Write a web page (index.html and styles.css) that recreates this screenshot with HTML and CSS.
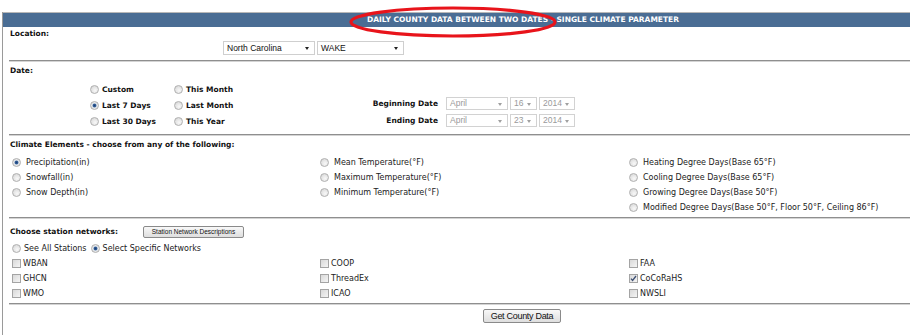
FILE: index.html
```html
<!DOCTYPE html>
<html lang="en">
<head>
    <meta charset="UTF-8">
    <title>Daily County Data</title>
    <link rel="stylesheet" href="styles.css">
</head>
<body>
    <div class="panel">
        <div class="title">DAILY COUNTY DATA BETWEEN TWO DATES - SINGLE CLIMATE PARAMETER</div>

        <!-- Location -->
        <div class="block loc">
            <div class="head">Location:</div>
            <div class="loc-row">
                <span class="sel state">North Carolina<i class="arr"></i></span>
                <span class="sel county">WAKE<i class="arr"></i></span>
            </div>
        </div>

        <!-- Date -->
        <div class="block date">
            <div class="head">Date:</div>
            <div class="date-body">
                <div class="presets">
                    <label class="opt"><input type="radio" name="range">Custom</label>
                    <label class="opt"><input type="radio" name="range">This Month</label>
                    <label class="opt"><input type="radio" name="range" checked>Last 7 Days</label>
                    <label class="opt"><input type="radio" name="range">Last Month</label>
                    <label class="opt"><input type="radio" name="range">Last 30 Days</label>
                    <label class="opt"><input type="radio" name="range">This Year</label>
                </div>
                <div class="range">
                    <div class="range-row">
                        <span class="range-label">Beginning Date</span>
                        <span class="sel off month">April<i class="arr"></i></span>
                        <span class="sel off day">16<i class="arr"></i></span>
                        <span class="sel off year">2014<i class="arr"></i></span>
                    </div>
                    <div class="range-row">
                        <span class="range-label">Ending Date</span>
                        <span class="sel off month">April<i class="arr"></i></span>
                        <span class="sel off day">23<i class="arr"></i></span>
                        <span class="sel off year">2014<i class="arr"></i></span>
                    </div>
                </div>
            </div>
        </div>

        <!-- Climate elements -->
        <div class="block climate">
            <div class="head">Climate Elements - choose from any of the following:</div>
            <div class="grid elements">
                <label class="item"><input type="radio" name="elem" checked>Precipitation(in)</label>
                <label class="item"><input type="radio" name="elem">Mean Temperature(°F)</label>
                <label class="item"><input type="radio" name="elem">Heating Degree Days(Base 65°F)</label>
                <label class="item"><input type="radio" name="elem">Snowfall(in)</label>
                <label class="item"><input type="radio" name="elem">Maximum Temperature(°F)</label>
                <label class="item"><input type="radio" name="elem">Cooling Degree Days(Base 65°F)</label>
                <label class="item"><input type="radio" name="elem">Snow Depth(in)</label>
                <label class="item"><input type="radio" name="elem">Minimum Temperature(°F)</label>
                <label class="item"><input type="radio" name="elem">Growing Degree Days(Base 50°F)</label>
                <span></span>
                <span></span>
                <label class="item"><input type="radio" name="elem">Modified Degree Days(Base 50°F, Floor 50°F, Ceiling 86°F)</label>
            </div>
        </div>

        <!-- Station networks -->
        <div class="block stations">
            <div class="station-head">
                <span class="head">Choose station networks:</span>
                <button class="btn small">Station Network Descriptions</button>
            </div>
            <div class="which">
                <label class="item"><input type="radio" name="which">See All Stations</label>
                <label class="item"><input type="radio" name="which" checked>Select Specific Networks</label>
            </div>
            <div class="grid networks">
                <label class="item"><span class="box"></span>WBAN</label>
                <label class="item"><span class="box"></span>COOP</label>
                <label class="item"><span class="box"></span>FAA</label>
                <label class="item"><span class="box"></span>GHCN</label>
                <label class="item"><span class="box"></span>ThreadEx</label>
                <label class="item"><span class="box"><svg width="9" height="9" viewBox="0 0 9 9"><path d="M2 4.6 L3.6 6.5 L7 2" fill="none" stroke="#3d4f73" stroke-width="1.3"/></svg></span>CoCoRaHS</label>
                <label class="item"><span class="box"></span>WMO</label>
                <label class="item"><span class="box"></span>ICAO</label>
                <label class="item"><span class="box"></span>NWSLI</label>
            </div>
        </div>

        <div class="footer">
            <button class="btn submit">Get County Data</button>
        </div>
    </div>

    <!-- annotation drawn over the title -->
    <svg class="mark" width="214" height="38" viewBox="0 0 214 38">
        <ellipse cx="106" cy="18" rx="102" ry="14" fill="none" stroke="#e8141b" stroke-width="3.2"/>
    </svg>
</body>
</html>
```

FILE: styles.css
```css
/* Global Styles */
body {
    margin: 0;
    background-color: #ffffff;
    font-family: "DejaVu Sans", Verdana, sans-serif;
    font-size: 8px;
    color: #222;
}

.panel {
    margin: 12px 0 0 2px;
    width: 907px;
    min-height: 323px;
    border-left: 1px solid #9a9a9a;
}

.title {
    height: 14px;
    line-height: 14px;
    border-top: 1px solid #b8b8b8;
    background-color: #4a6d94;
    color: #ffffff;
    font-weight: bold;
    font-size: 7.5px;
    padding-left: 364px;
    white-space: nowrap;
}

/* Sections */
.block {
    margin-left: 6px;
    padding-left: 1px;
    border-bottom: 1px solid #8f8f8f;
    box-shadow: 0 1px 0 #d4d4d4;
}

.head {
    display: block;
    line-height: 10px;
    font-weight: bold;
    font-size: 7.5px;
    color: #111;
}

/* Location */
.loc {
    padding-top: 2px;
    padding-bottom: 5px;
}

.loc-row {
    display: flex;
    gap: 2px;
    margin: 2px 0 0 213px;
}

/* Fake select boxes */
.sel {
    position: relative;
    box-sizing: border-box;
    display: inline-block;
    height: 14px;
    line-height: 12px;
    padding-left: 3px;
    border: 1px solid #cfcfcf;
    background-color: #ffffff;
    font-family: "Liberation Sans", Arial, sans-serif;
    font-size: 8.5px;
    color: #111;
}

.sel .arr {
    position: absolute;
    right: 5px;
    top: 5px;
    width: 0;
    height: 0;
    border-left: 2.5px solid transparent;
    border-right: 2.5px solid transparent;
    border-top: 3px solid #222;
}

.state { width: 92px; }
.county { width: 87px; }

.sel.off {
    height: 13px;
    line-height: 11px;
    color: #9a9a9a;
    border-color: #d2d2d2;
}

.sel.off .arr {
    top: 5px;
    border-top-color: #a0a0a0;
}

.month { width: 62px; }
.day { width: 27px; }
.year { width: 36px; }

/* Date */
.date {
    padding-top: 5px;
    padding-bottom: 5px;
}

.date-body {
    display: flex;
    align-items: flex-end;
    margin-top: 5px;
}

.presets {
    display: grid;
    grid-template-columns: 84px 84px;
    margin-left: 80px;
}

.opt {
    display: flex;
    align-items: center;
    gap: 3px;
    height: 16px;
    font-weight: bold;
    font-size: 7.5px;
    color: #111;
}

.range {
    display: flex;
    flex-direction: column;
    gap: 4px;
    margin: 0 0 2px 62px;
}

.range-row {
    display: flex;
    align-items: center;
    gap: 2px;
}

.range-label {
    width: 118px;
    margin-right: 6px;
    text-align: right;
    font-weight: bold;
    font-size: 7.5px;
    color: #111;
}

/* Radios and checkboxes */
input[type="radio"] {
    appearance: none;
    -webkit-appearance: none;
    box-sizing: border-box;
    width: 9px;
    height: 9px;
    margin: 0;
    border: 1px solid #b0b0b0;
    border-radius: 50%;
    background: radial-gradient(circle at 60% 65%, #f8f8f8 0, #e8e8e8 45%, #d0d0d0 100%);
    flex: none;
}

input[type="radio"]:checked {
    background: radial-gradient(circle at 50% 50%, #1f3f73 0, #2e5b96 28%, #c9d3df 45%, #e8e8e8 60%, #cfcfcf 100%);
}

.box {
    box-sizing: border-box;
    display: inline-block;
    width: 9px;
    height: 9px;
    border: 1px solid #a4a4a4;
    background: linear-gradient(135deg, #d9d9d9, #f5f5f5);
    flex: none;
}

.box svg {
    display: block;
    margin: -1px 0 0 -1px;
}

.grid {
    display: grid;
    grid-template-columns: 308px 309px 1fr;
}

.item {
    display: flex;
    align-items: center;
    height: 15px;
    color: #222;
}

/* Climate */
.climate {
    padding-top: 5px;
    padding-bottom: 2px;
}

.elements {
    margin: 5px 0 0 2px;
}

.elements .item {
    gap: 5px;
}

/* Stations */
.stations {
    padding-top: 7px;
    padding-bottom: 2px;
}

.station-head {
    display: flex;
    align-items: center;
    height: 13px;
}

.station-head .head {
    width: 133px;
}

.which {
    display: flex;
    gap: 4px;
    height: 16px;
    margin: 2px 0 0 2px;
}

.which .item {
    height: 16px;
    gap: 3px;
}

.networks {
    margin-left: 2px;
}

.networks .item {
    gap: 2px;
}

/* Buttons */
.btn {
    box-sizing: border-box;
    padding: 0;
    border: 1px solid #8a8a8a;
    border-radius: 2px;
    background: linear-gradient(#f8f8f8, #dedede);
    font-family: "Liberation Sans", Arial, sans-serif;
    color: #111;
}

.small {
    width: 101px;
    height: 12px;
    font-size: 6.5px;
    line-height: 10px;
}

.footer {
    padding: 5px 0 0 480px;
}

.submit {
    width: 78px;
    height: 14px;
    font-size: 9px;
    line-height: 12px;
    letter-spacing: -0.3px;
}

/* red annotation ellipse */
.mark {
    position: absolute;
    left: 347px;
    top: 4px;
}
```
